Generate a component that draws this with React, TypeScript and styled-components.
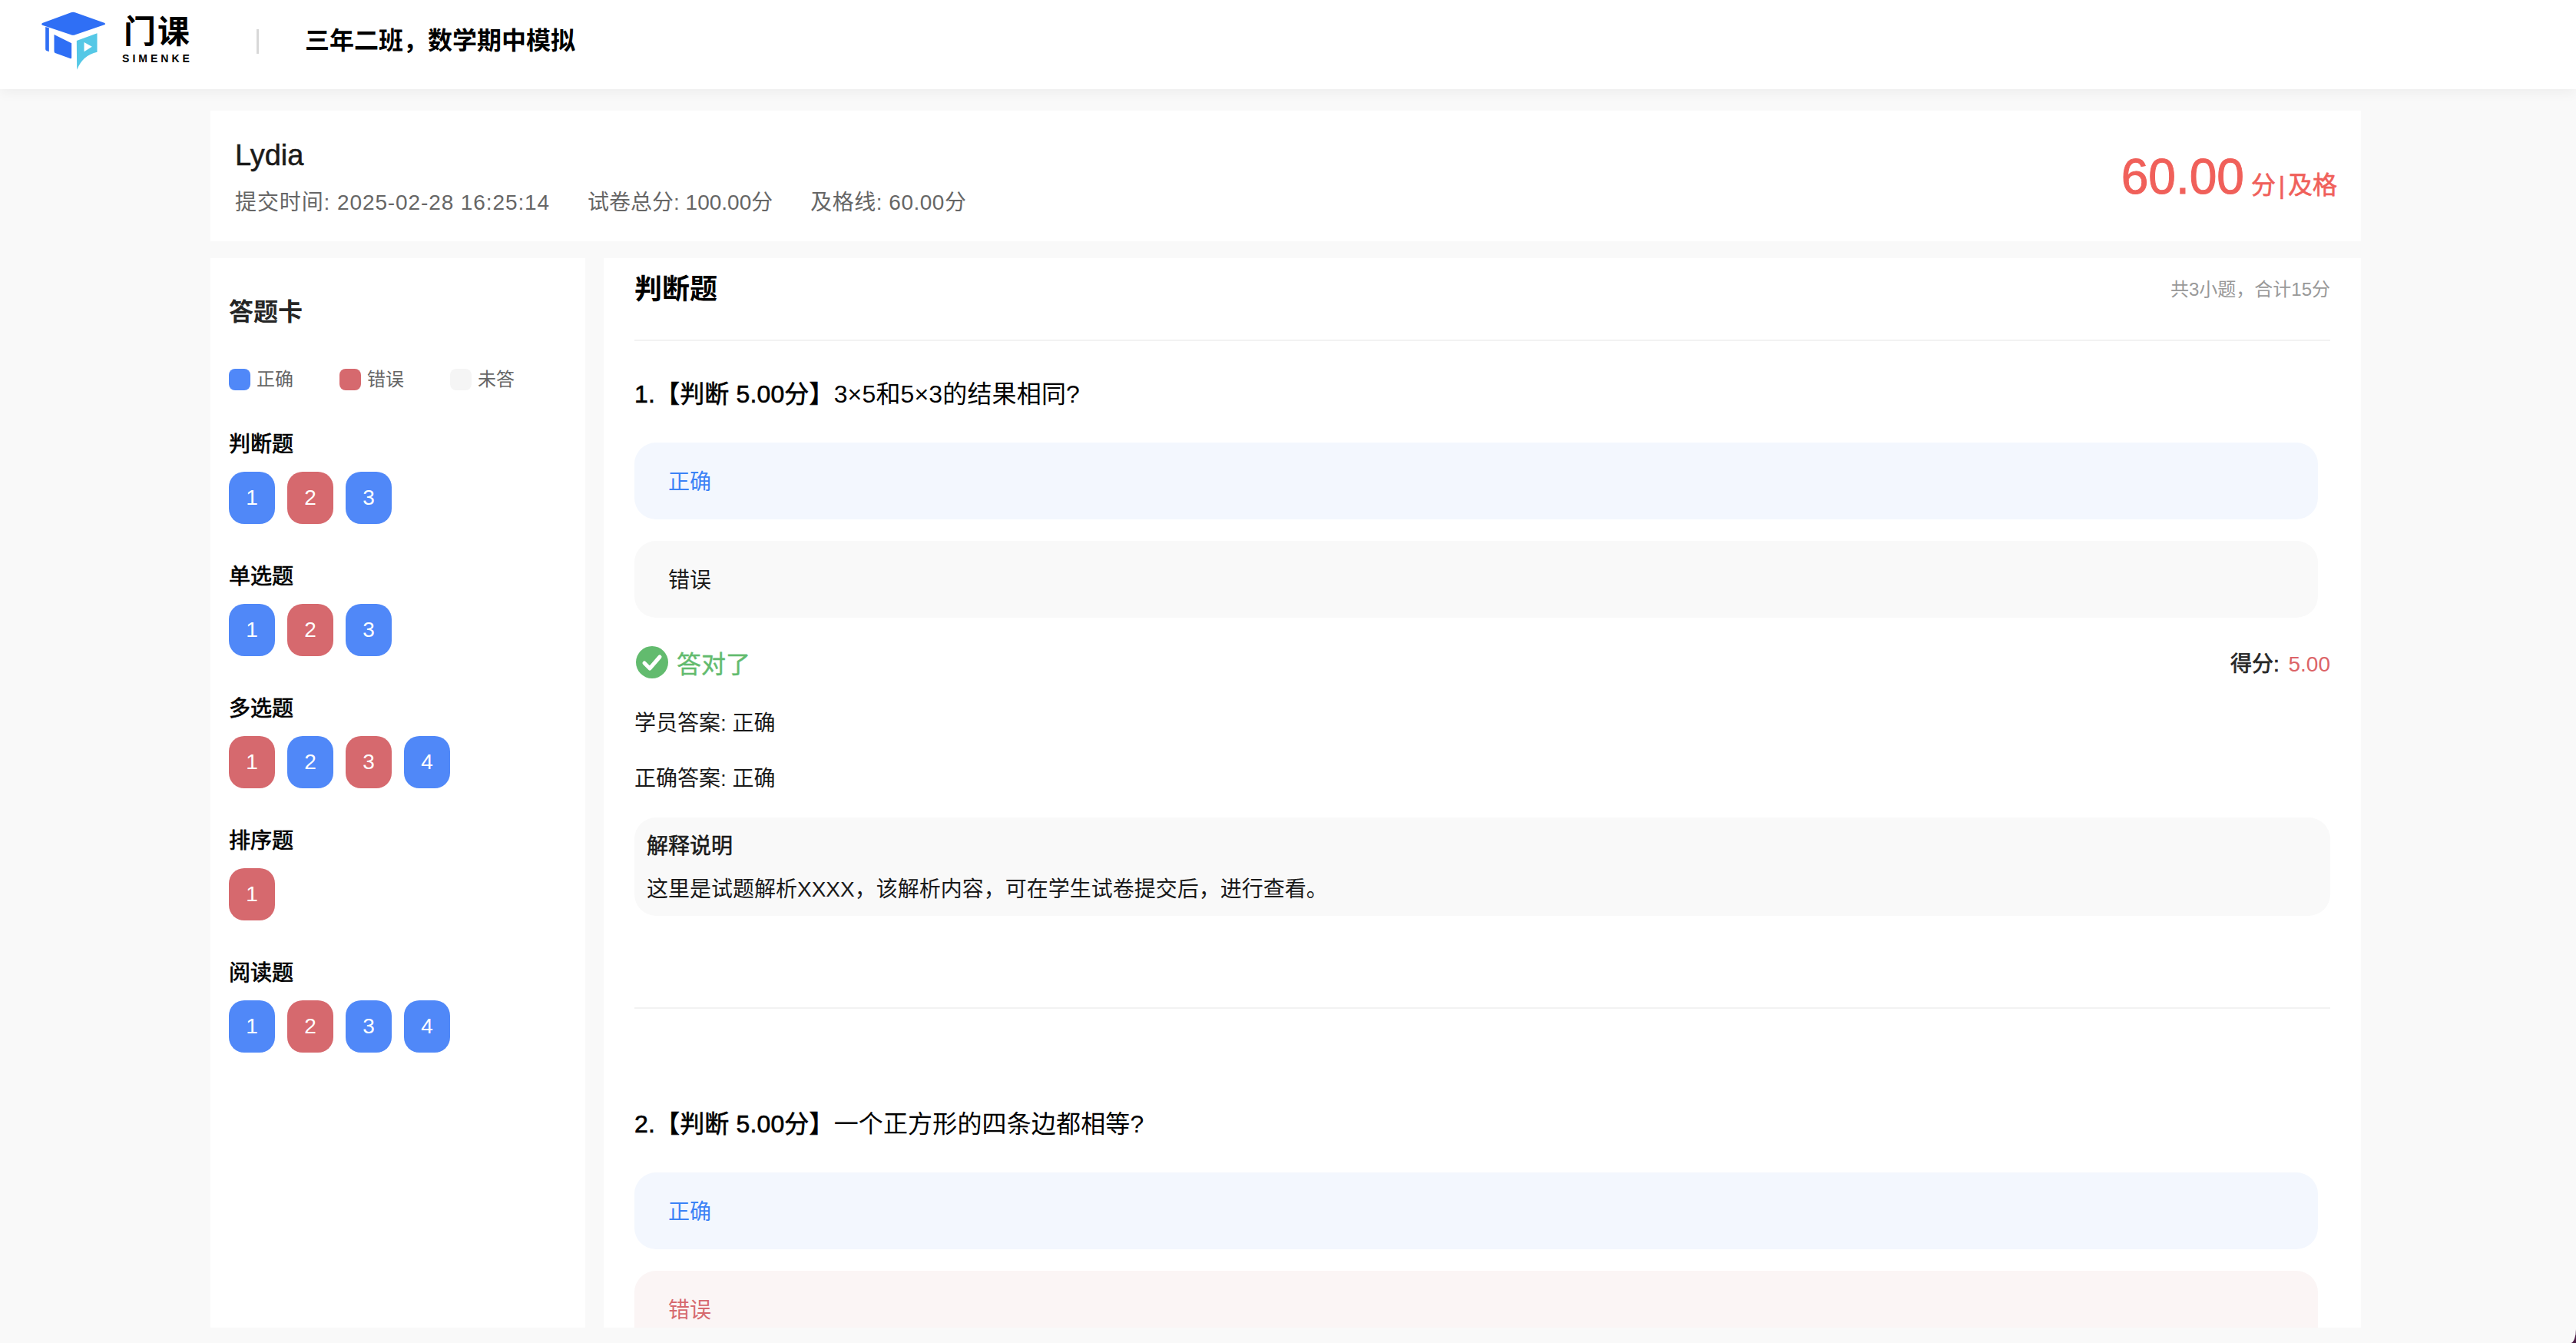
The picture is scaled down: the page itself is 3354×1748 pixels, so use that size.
import React from 'react';
import styled, { createGlobalStyle } from 'styled-components';

const FONT = '"Liberation Sans", "Noto Sans CJK SC", sans-serif';

const Global = createGlobalStyle`
  html, body { margin: 0; padding: 0; height: 100%; overflow: hidden; background: #4a1f45; }
  * { box-sizing: border-box; }
  body { font-family: ${FONT}; color: #1a1a1a; }
`;

const Page = styled.div`
  height: 1748px;
  display: flex;
  flex-direction: column;
  overflow: hidden;
  background: #f9f9f9;
  border-bottom-right-radius: 7px 18px;
`;

const Header = styled.header`
  height: 116px;
  flex: none;
  display: flex;
  align-items: center;
  background: #fff;
  box-shadow: 0 4px 16px rgba(0, 0, 0, 0.05);
  padding-left: 53px;
`;

const Logo = styled.svg`
  width: 87px;
  height: 80px;
  flex: none;
  margin-bottom: 10px;
`;

const Brand = styled.div`
  margin-left: 19px;
  margin-bottom: 12px;
  width: 92px;
  display: flex;
  flex-direction: column;
  align-items: center;
`;

const BrandName = styled.div`
  font-size: 42px;
  line-height: 42px;
  font-weight: 700;
  color: #000;
  letter-spacing: 2px;
`;

const BrandSub = styled.div`
  font-size: 14px;
  line-height: 14px;
  margin-top: 6px;
  font-weight: 700;
  letter-spacing: 4px;
  white-space: nowrap;
  color: #000;
`;

const Sep = styled.div`
  width: 3px;
  height: 32px;
  margin: 0 0 8px 83px;
  background: #d8d8d8;
`;

const ExamTitle = styled.h1`
  margin: 0 0 10px 60px;
  font-size: 32px;
  line-height: 44px;
  font-weight: 700;
  color: #000;
`;

const Body = styled.main`
  width: 2800px;
  margin: 28px 0 0 274px;
  flex: 1;
  min-height: 0;
  display: flex;
  flex-direction: column;
  gap: 22px;
  padding-bottom: 20px;
`;

const SummaryCard = styled.section`
  height: 170px;
  flex: none;
  background: #fff;
  display: flex;
  align-items: center;
  justify-content: space-between;
  padding: 0 31px 0 32px;
`;

const Student = styled.div`
  display: flex;
  flex-direction: column;
  gap: 20px;
  margin-top: 6px;
`;

const StudentName = styled.div`
  font-size: 38px;
  line-height: 44px;
  color: #1a1a1a;
  -webkit-text-stroke: 0.5px #1a1a1a;
`;

const Meta = styled.div`
  display: flex;
  gap: 49px;
  font-size: 28px;
  line-height: 40px;
  color: #666;
`;

const MetaItem = styled.span`
  letter-spacing: 0.5px;
  &:first-child { letter-spacing: 0.9px; }
  &:nth-child(2) { letter-spacing: 0; }
`;

const Score = styled.div`
  display: flex;
  align-items: baseline;
  gap: 9px;
  color: #f0605a;
  margin-top: 2px;
`;

const ScoreValue = styled.span`
  font-size: 64px;
  line-height: 72px;
  -webkit-text-stroke: 1px #f0605a;
`;

const ScoreUnit = styled.span`
  font-size: 32px;
  word-spacing: -5px;
  -webkit-text-stroke: 0.6px #f0605a;
`;

const Columns = styled.div`
  flex: 1;
  min-height: 0;
  display: flex;
  gap: 24px;
`;

const Sidebar = styled.aside`
  width: 488px;
  flex: none;
  background: #fff;
  padding: 46px 24px 0;
`;

const SideTitle = styled.h2`
  margin: 0;
  font-size: 32px;
  line-height: 48px;
  font-weight: 600;
  color: #262626;
`;

const Legend = styled.div`
  margin-top: 50px;
  display: flex;
`;

const LegendItem = styled.div`
  width: 144px;
  display: flex;
  align-items: center;
  gap: 8px;
  font-size: 24px;
  line-height: 28px;
  color: #666;
`;

const Swatch = styled.span<{ $c: string }>`
  width: 28px;
  height: 28px;
  border-radius: 8px;
  background: ${(p) => p.$c};
`;

const Group = styled.div`
  margin-top: 51px;
  & + & { margin-top: 49px; }
`;

const GroupTitle = styled.div`
  font-size: 28px;
  line-height: 40px;
  color: #000;
  -webkit-text-stroke: 0.7px #000;
`;

const Numbers = styled.div`
  margin-top: 15px;
  display: flex;
  gap: 16px;
`;

const Num = styled.div<{ $c: string }>`
  width: 60px;
  height: 68px;
  border-radius: 20px;
  background: ${(p) => p.$c};
  color: #fff;
  font-size: 28px;
  display: flex;
  align-items: center;
  justify-content: center;
`;

const Content = styled.section`
  flex: 1;
  min-width: 0;
  background: #fff;
  overflow: hidden;
  padding: 0 40px;
`;

const ContentHead = styled.div`
  height: 108px;
  border-bottom: 2px solid #f2f2f2;
  display: flex;
  justify-content: space-between;
  align-items: flex-start;
  padding-top: 17px;
`;

const ContentTitle = styled.h2`
  margin: 0;
  font-size: 36px;
  line-height: 48px;
  font-weight: 700;
  color: #000;
`;

const ContentNote = styled.span`
  font-size: 24px;
  line-height: 48px;
  color: #999;
`;

const Question = styled.article`
  padding-top: 47px;
  & + & {
    margin-top: 119px;
    border-top: 2px solid #f2f2f2;
    padding-top: 128px;
  }
`;

const QTitle = styled.div`
  font-size: 32px;
  line-height: 44px;
  color: #000;
  letter-spacing: 0.15px;
  margin-bottom: 41px;
`;

const QTag = styled.span`
  -webkit-text-stroke: 0.6px #000;
`;

const Option = styled.div<{ $tone: 'blue' | 'red' | 'gray' }>`
  width: 2192px;
  height: 100px;
  margin-top: 28px;
  padding: 0 0 3px 44px;
  display: flex;
  align-items: center;
  border-radius: 28px;
  font-size: 28px;
  background: ${(p) => (p.$tone === 'blue' ? '#f3f7fe' : p.$tone === 'red' ? '#fbf5f5' : '#f9f9f9')};
  color: ${(p) => (p.$tone === 'blue' ? '#3b82f6' : p.$tone === 'red' ? '#d6696e' : '#1a1a1a')};
`;

const ResultRow = styled.div`
  margin-top: 36px;
  margin-bottom: 38px;
  height: 44px;
  display: flex;
  align-items: center;
  justify-content: space-between;
`;

const Verdict = styled.div`
  display: flex;
  align-items: center;
  gap: 11px;
  padding-left: 2px;
  font-size: 32px;
  color: #62bb6e;
  -webkit-text-stroke: 0.4px #62bb6e;
`;

const Points = styled.div`
  font-size: 28px;
  color: #262626;
  word-spacing: 4px;
`;

const PointsLabel = styled.span`
  -webkit-text-stroke: 0.7px #262626;
`;

const PointsValue = styled.span`
  color: #dc6468;
`;

const AnswerLine = styled.div`
  margin-top: 32px;
  font-size: 28px;
  line-height: 40px;
  color: #1a1a1a;
`;

const Explain = styled.div`
  margin-top: 30px;
  height: 128px;
  border-radius: 28px;
  background: #f9f9f9;
  padding: 18px 16px 0;
  font-size: 28px;
  line-height: 40px;
  color: #1a1a1a;
`;

const ExplainTitle = styled.div`
  -webkit-text-stroke: 0.6px #1a1a1a;
  margin-bottom: 16px;
`;

const BLUE = '#5088f8';
const RED = '#d6696e';

const groups: { title: string; items: string[] }[] = [
  { title: '判断题', items: [BLUE, RED, BLUE] },
  { title: '单选题', items: [BLUE, RED, BLUE] },
  { title: '多选题', items: [RED, BLUE, RED, BLUE] },
  { title: '排序题', items: [RED] },
  { title: '阅读题', items: [BLUE, RED, BLUE, BLUE] },
];

export default function App() {
  return (
    <Page>
      <Global />
      <Header>
        <Logo viewBox="40 40 260 240" aria-hidden="true">
          <path d="M158 50 Q166 47 174 50 L288 90 Q296 94 288 98 L174 137 Q166 140 158 137 L46 99 Q40 95 46 91 Z" fill="#2f6ff5" />
          <path d="M58 106 L72 110 L72 203 L62 199 Q58 197 58 192 Z" fill="#2f6ff5" />
          <path d="M92 136 L160 170 L160 226 Q160 231 154 229 L98 209 Q92 207 92 201 Z" fill="#2f6ff5" />
          <path d="M180 160 L260 131 L260 204 Q204 216 181 273 Z" fill="#55c8e6" />
          <path d="M209 166 L240 183 L209 203 Z" fill="#fff" />
        </Logo>
        <Brand>
          <BrandName>门课</BrandName>
          <BrandSub>SIMENKE</BrandSub>
        </Brand>
        <Sep />
        <ExamTitle>三年二班，数学期中模拟</ExamTitle>
      </Header>
      <Body>
        <SummaryCard>
          <Student>
            <StudentName>Lydia</StudentName>
            <Meta>
              <MetaItem>提交时间: 2025-02-28 16:25:14</MetaItem>
              <MetaItem>试卷总分: 100.00分</MetaItem>
              <MetaItem>及格线: 60.00分</MetaItem>
            </Meta>
          </Student>
          <Score>
            <ScoreValue>60.00</ScoreValue>
            <ScoreUnit>分 | 及格</ScoreUnit>
          </Score>
        </SummaryCard>
        <Columns>
          <Sidebar>
            <SideTitle>答题卡</SideTitle>
            <Legend>
              <LegendItem><Swatch $c={BLUE} />正确</LegendItem>
              <LegendItem><Swatch $c={RED} />错误</LegendItem>
              <LegendItem><Swatch $c="#f5f5f5" />未答</LegendItem>
            </Legend>
            {groups.map((g) => (
              <Group key={g.title}>
                <GroupTitle>{g.title}</GroupTitle>
                <Numbers>
                  {g.items.map((c, i) => (
                    <Num key={i} $c={c}>{i + 1}</Num>
                  ))}
                </Numbers>
              </Group>
            ))}
          </Sidebar>
          <Content>
            <ContentHead>
              <ContentTitle>判断题</ContentTitle>
              <ContentNote>共3小题，合计15分</ContentNote>
            </ContentHead>
            <Question>
              <QTitle><QTag>1.【判断 5.00分】</QTag>3×5和5×3的结果相同?</QTitle>
              <Option $tone="blue">正确</Option>
              <Option $tone="gray">错误</Option>
              <ResultRow>
                <Verdict>
                  <svg width="42" height="42" viewBox="0 0 42 42" aria-hidden="true">
                    <circle cx="21" cy="21" r="21" fill="#62bb6e" stroke="none" />
                    <path d="M11 22 L18 29 L31 14" fill="none" stroke="#fff" strokeWidth="5" strokeLinecap="round" strokeLinejoin="round" />
                  </svg>
                  答对了
                </Verdict>
                <Points><PointsLabel>得分:</PointsLabel> <PointsValue>5.00</PointsValue></Points>
              </ResultRow>
              <AnswerLine>学员答案: 正确</AnswerLine>
              <AnswerLine>正确答案: 正确</AnswerLine>
              <Explain>
                <ExplainTitle>解释说明</ExplainTitle>
                这里是试题解析XXXX，该解析内容，可在学生试卷提交后，进行查看。
              </Explain>
            </Question>
            <Question>
              <QTitle><QTag>2.【判断 5.00分】</QTag>一个正方形的四条边都相等?</QTitle>
              <Option $tone="blue">正确</Option>
              <Option $tone="red">错误</Option>
            </Question>
          </Content>
        </Columns>
      </Body>
    </Page>
  );
}
